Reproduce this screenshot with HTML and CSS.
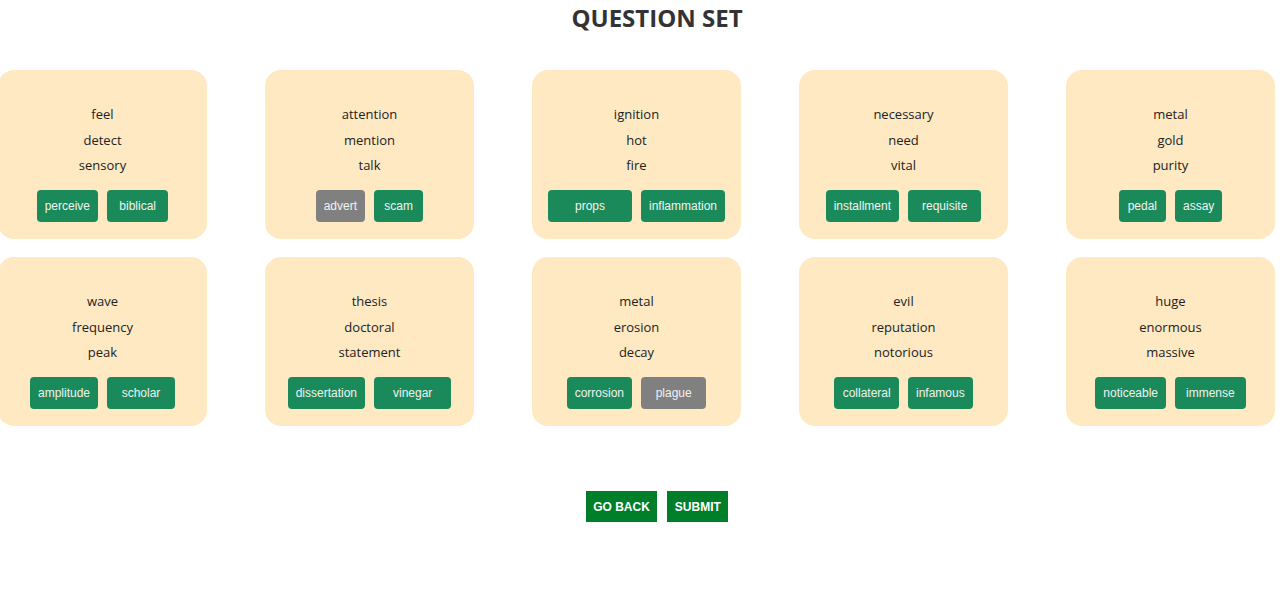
FILE: index.html
```html
<!DOCTYPE html>
<html lang="en">
<head>
<meta charset="utf-8">
<title>Question Set</title>
<link rel="stylesheet" href="styles.css">
</head>
<body>
<h1 class="title">QUESTION SET</h1>
<div class="grid">
  <div class="card"><div class="words"><p>feel</p><p>detect</p><p>sensory</p></div><div class="opts"><button class="opt">perceive</button><button class="opt">biblical</button></div></div>
  <div class="card"><div class="words"><p>attention</p><p>mention</p><p>talk</p></div><div class="opts"><button class="opt grey">advert</button><button class="opt">scam</button></div></div>
  <div class="card"><div class="words"><p>ignition</p><p>hot</p><p>fire</p></div><div class="opts"><button class="opt">props</button><button class="opt">inflammation</button></div></div>
  <div class="card"><div class="words"><p>necessary</p><p>need</p><p>vital</p></div><div class="opts"><button class="opt">installment</button><button class="opt">requisite</button></div></div>
  <div class="card"><div class="words"><p>metal</p><p>gold</p><p>purity</p></div><div class="opts"><button class="opt">pedal</button><button class="opt">assay</button></div></div>
  <div class="card"><div class="words"><p>wave</p><p>frequency</p><p>peak</p></div><div class="opts"><button class="opt">amplitude</button><button class="opt">scholar</button></div></div>
  <div class="card"><div class="words"><p>thesis</p><p>doctoral</p><p>statement</p></div><div class="opts"><button class="opt">dissertation</button><button class="opt">vinegar</button></div></div>
  <div class="card"><div class="words"><p>metal</p><p>erosion</p><p>decay</p></div><div class="opts"><button class="opt">corrosion</button><button class="opt grey">plague</button></div></div>
  <div class="card"><div class="words"><p>evil</p><p>reputation</p><p>notorious</p></div><div class="opts"><button class="opt">collateral</button><button class="opt">infamous</button></div></div>
  <div class="card"><div class="words"><p>huge</p><p>enormous</p><p>massive</p></div><div class="opts"><button class="opt">noticeable</button><button class="opt">immense</button></div></div>
</div>
<div class="actions">
  <button class="action">GO BACK</button>
  <button class="action">SUBMIT</button>
</div>
</body>
</html>
```
FILE: styles.css
```css
html, body {
  margin: 0;
  padding: 0;
  background: #ffffff;
}
body {
  font-family: "Open Sans", "Noto Sans", sans-serif;
  color: #222;
  width: 1280px;
  overflow: hidden;
}
.title {
  margin: 0;
  padding: 3px 0 0 34px;
  height: 67px;
  box-sizing: border-box;
  text-align: center;
  font-size: 24px;
  line-height: 30px;
  font-weight: 700;
  color: #333333;
}
.grid {
  display: grid;
  grid-template-columns: repeat(5, 209px);
  column-gap: 58px;
  row-gap: 18px;
  margin-left: -2px;
  margin-top: 3px;
}
.card {
  background: #fee9c3;
  border-radius: 16px;
  padding: 32px 0 17px;
  height: 169px;
  box-sizing: border-box;
  display: flex;
  flex-direction: column;
  align-items: center;
}
.words p {
  margin: 0;
  text-align: center;
  font-size: 13px;
  line-height: 25.5px;
  color: #222;
}
.opts {
  margin-top: 11px;
  display: inline-grid;
  grid-auto-flow: column;
  grid-auto-columns: 1fr;
  column-gap: 9px;
}
.opt {
  font-family: "Liberation Sans", Arial, sans-serif;
  font-size: 12px;
  height: 32px;
  padding: 1px 8px 0;
  border: none;
  border-radius: 4px;
  background: #1a8a5a;
  color: #f2f2f2;
  white-space: nowrap;
}
.opt.grey {
  background: #808080;
}
.actions {
  display: flex;
  justify-content: center;
  gap: 10px;
  padding-left: 34px;
  margin-top: 65px;
}
.action {
  font-family: "Liberation Sans", Arial, sans-serif;
  font-size: 12px;
  font-weight: 700;
  height: 31px;
  padding: 0 7.5px;
  border: none;
  border-radius: 0;
  background: #007f2a;
  color: #ffffff;
}
```
